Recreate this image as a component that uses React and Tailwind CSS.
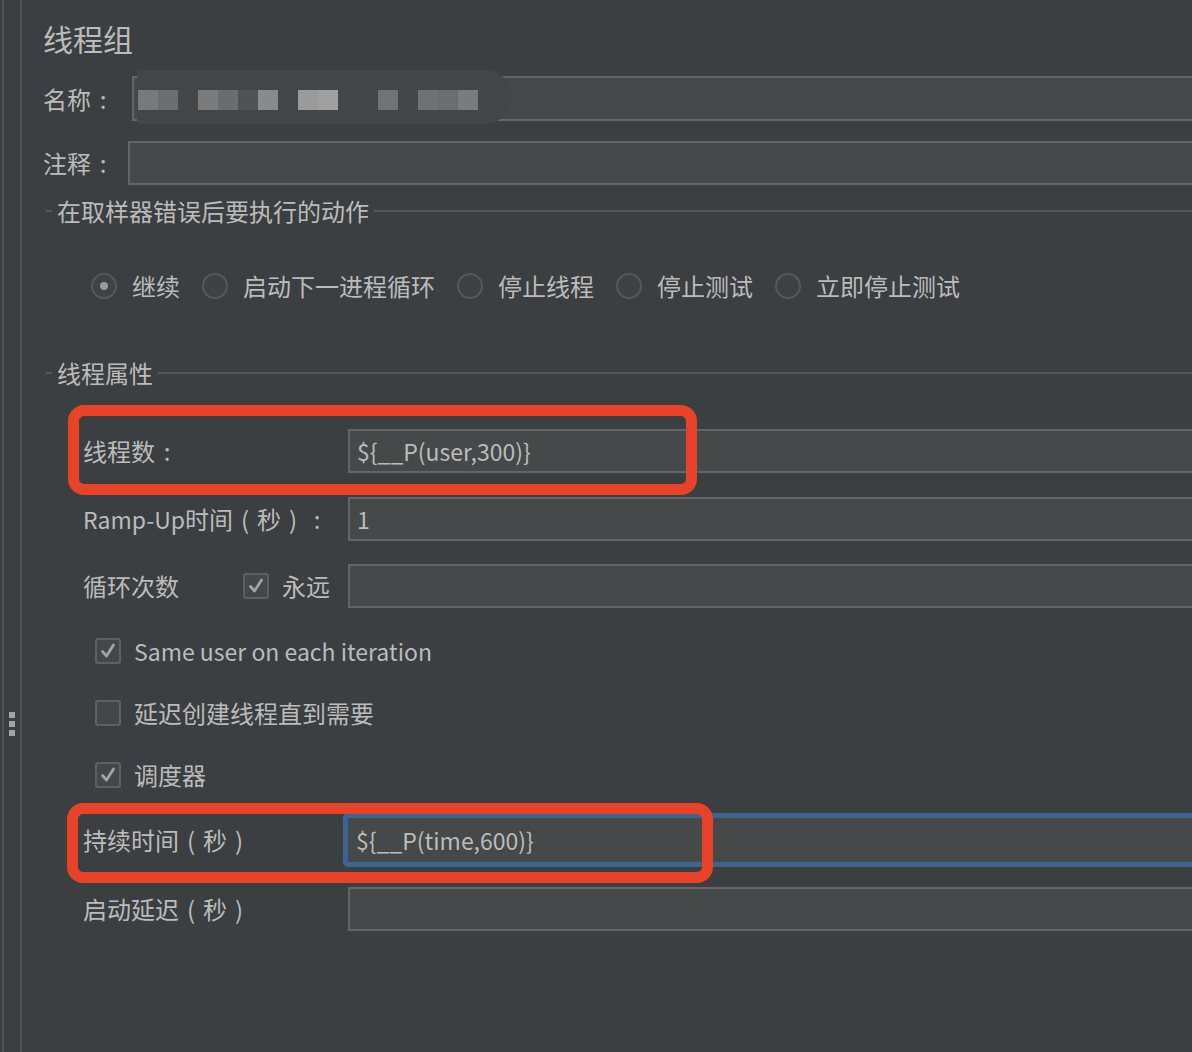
const blurBlocks = [
  'bg-[#797979]', 'bg-[#6c6f70]', 'bg-transparent',
  'bg-[#7b7b7b]', 'bg-[#6a6c6d]', 'bg-[#505354]', 'bg-[#8a8a8a]', 'bg-transparent',
  'bg-[#9b9b9b]', 'bg-[#a0a0a0]', 'bg-transparent', 'bg-transparent',
  'bg-[#717474]', 'bg-transparent',
  'bg-[#6f7272]', 'bg-[#6b6d6e]', 'bg-[#7a7b7b]',
];

const radios = [
  { label: '继续', checked: true },
  { label: '启动下一进程循环' },
  { label: '停止线程' },
  { label: '停止测试' },
  { label: '立即停止测试' },
];

// full-width punctuation, centered in its box like the mac font does
const P = ({ children }) => (
  <span className="inline-block w-[24px] text-center">{children}</span>
);

const Field = ({ value, className = '' }) => (
  <div className={`flex h-[44px] flex-1 items-center border-2 border-r-0 border-[#646567] bg-[#45494a] pl-[7px] text-[23px] text-[#bbbbbb] ${className}`}>
    {value}
  </div>
);

const Checkbox = ({ checked }) => (
  <div className="flex h-[26px] w-[26px] shrink-0 items-center justify-center rounded-[3px] border-2 border-[#5d6062] bg-[#43474a]">
    {checked && (
      <svg width="18" height="18" viewBox="0 0 18 18">
        <path d="M3.5 9.5 L7.5 14 L14.5 3" fill="none" stroke="#a3a3a3" strokeWidth="2.8" strokeLinecap="round" strokeLinejoin="round" />
      </svg>
    )}
  </div>
);

const Radio = ({ checked }) => (
  <div className="flex h-[26px] w-[26px] shrink-0 items-center justify-center rounded-full border-2 border-[#55585a] bg-[#3f4244]">
    {checked && <div className="h-[8px] w-[8px] rounded-full bg-[#9a9a9a]"></div>}
  </div>
);

const SectionTitle = ({ title }) => (
  <div className="flex h-[24px] items-center">
    <div className="ml-[3px] h-[2px] w-[6px] bg-[#545759]"></div>
    <span className="px-[5px] text-[24px] leading-none">{title}</span>
    <div className="h-[2px] flex-1 bg-[#545759]"></div>
  </div>
);

export default function App() {
  return (
    <div className="relative flex h-[1052px] w-[1192px] overflow-hidden bg-[#3c3f41] font-['Noto_Sans_CJK_SC',sans-serif] text-[#bbbbbb]">
      {/* left splitter strip */}
      <div className="flex h-full w-[22px] shrink-0">
        <div className="w-[2px]"></div>
        <div className="w-[2px] bg-[#4f5254]"></div>
        <div className="flex flex-1 flex-col items-center justify-center gap-[3px] pt-[396px]">
          <div className="h-[6px] w-[6px] bg-[#a2a2a2]"></div>
          <div className="h-[6px] w-[6px] bg-[#a2a2a2]"></div>
          <div className="h-[6px] w-[6px] bg-[#a2a2a2]"></div>
        </div>
        <div className="w-[2px] bg-[#4f5254]"></div>
      </div>

      <div className="flex flex-1 flex-col pl-[21px]">
        <div className="mt-[8px] flex h-[60px] items-center text-[30px]">线程组</div>

        <div className="mt-[8px] flex items-center">
          <div className="w-[89px] text-[24px]">名称<P>:</P></div>
          <Field value="" className="h-[45px]" />
        </div>

        <div className="mt-[20px] flex items-center">
          <div className="w-[85px] text-[24px]">注释<P>:</P></div>
          <Field value="" />
        </div>

        <div className="mt-[14px]">
          <SectionTitle title="在取样器错误后要执行的动作" />
        </div>

        <div className="ml-[48px] mt-[48px] flex h-[30px] items-center gap-[22px] text-[24px]">
          {radios.map((r) => (
            <div key={r.label} className="flex items-center gap-[15px]">
              <Radio checked={r.checked} />
              <span>{r.label}</span>
            </div>
          ))}
        </div>

        <div className="mt-[60px]">
          <SectionTitle title="线程属性" />
        </div>

        <div className="ml-[40px] flex flex-col text-[24px]">
          <div className="mt-[44px] flex items-center">
            <div className="w-[265px]">线程数<P>:</P></div>
            <Field value="${__P(user,300)}" />
          </div>

          <div className="mt-[24px] flex items-center">
            <div className="w-[265px]"><span className="text-[23px]">Ramp-Up</span>时间<P>(</P>秒<P>)</P><P>:</P></div>
            <Field value="1" />
          </div>

          <div className="mt-[23px] flex items-center">
            <div className="w-[160px]">循环次数</div>
            <Checkbox checked />
            <div className="ml-[13px] w-[66px]">永远</div>
            <Field value="" />
          </div>

          <div className="ml-[12px] mt-[30px] flex h-[26px] items-center gap-[13px]">
            <Checkbox checked />
            <span className="text-[23px]">Same user on each iteration</span>
          </div>

          <div className="ml-[12px] mt-[36px] flex h-[26px] items-center gap-[13px]">
            <Checkbox />
            <span>延迟创建线程直到需要</span>
          </div>

          <div className="ml-[12px] mt-[36px] flex h-[26px] items-center gap-[13px]">
            <Checkbox checked />
            <span>调度器</span>
          </div>

          <div className="mt-[25px] flex items-center">
            <div className="w-[260px]">持续时间<P>(</P>秒<P>)</P></div>
            <div className="flex h-[54px] flex-1 items-center rounded-l-[5px] border-[5px] border-r-0 border-[#3e6590] bg-[#45494a] pl-[8px] text-[23px]">
              {'${__P(time,600)}'}
            </div>
          </div>

          <div className="mt-[20px] flex items-center">
            <div className="w-[265px]">启动延迟<P>(</P>秒<P>)</P></div>
            <Field value="" />
          </div>
        </div>
      </div>

      {/* blurred name value */}
      <div className="absolute left-[137px] top-[70px] flex h-[54px] w-[375px] rounded-r-[27px] bg-[#434648] pl-[1px] pt-[20px]">
        {blurBlocks.map((c, i) => (
          <div key={i} className={`h-[20px] w-[20px] ${c}`}></div>
        ))}
      </div>

      {/* red highlight boxes */}
      <div className="absolute left-[68px] top-[405px] h-[90px] w-[629px] rounded-[16px] border-[11px] border-[#e84329]"></div>
      <div className="absolute left-[67px] top-[803px] h-[80px] w-[646px] rounded-[16px] border-[11px] border-[#e84329]"></div>
    </div>
  );
}
